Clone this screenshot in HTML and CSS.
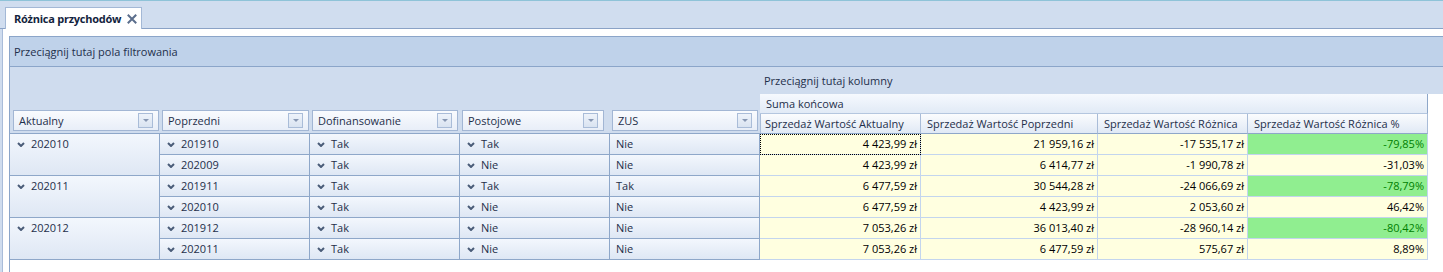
FILE: index.html
```html
<!DOCTYPE html>
<html lang="pl">
<head>
<meta charset="utf-8">
<title>Różnica przychodów</title>
<link rel="stylesheet" href="styles.css">
</head>
<body>
<div class="tabstrip">
  <div class="tabstrip-lead"></div>
  <div class="tab">
    <span class="tab-title">Różnica przychodów</span>
    <svg class="tab-close" width="10" height="10" viewBox="0 0 10 10"><path d="M1.5 1.5 L8.5 8.5 M8.5 1.5 L1.5 8.5" stroke="#5b6e8c" stroke-width="2" stroke-linecap="square"/></svg>
  </div>
  <div class="tabstrip-fill"></div>
</div>
<div class="panel">
  <div class="grid-box">
    <div class="filter-bar">Przeciągnij tutaj pola filtrowania</div>
    <div class="pivot">
      <div class="row-fields">
        <div class="field f-first"><span>Aktualny</span><span class="dd"><i></i></span></div>
        <div class="field"><span>Poprzedni</span><span class="dd"><i></i></span></div>
        <div class="field f-dof"><span>Dofinansowanie</span><span class="dd"><i></i></span></div>
        <div class="field f-post"><span>Postojowe</span><span class="dd"><i></i></span></div>
        <div class="field f-zus"><span>ZUS</span><span class="dd"><i></i></span></div>
      </div>
      <div class="col-drop">Przeciągnij tutaj kolumny</div>
      <div class="grand-total">Suma końcowa</div>
      <div class="col-head ch-first">Sprzedaż Wartość Aktualny</div>
      <div class="col-head">Sprzedaż Wartość Poprzedni</div>
      <div class="col-head">Sprzedaż Wartość Różnica</div>
      <div class="col-head">Sprzedaż Wartość Różnica %</div>

      <!-- 202010 -->
      <div class="rh rh-akt"><span class="chev"></span>202010</div>
      <div class="rh rh-prev"><span class="chev"></span>201910</div>
      <div class="rh"><span class="chev"></span>Tak</div>
      <div class="rh"><span class="chev"></span>Tak</div>
      <div class="rh rh-plain">Nie</div>
      <div class="val focus">4 423,99 zł</div>
      <div class="val">21 959,16 zł</div>
      <div class="val">-17 535,17 zł</div>
      <div class="val good">-79,85%</div>

      <div class="rh rh-prev"><span class="chev"></span>202009</div>
      <div class="rh"><span class="chev"></span>Tak</div>
      <div class="rh"><span class="chev"></span>Nie</div>
      <div class="rh rh-plain">Nie</div>
      <div class="val">4 423,99 zł</div>
      <div class="val">6 414,77 zł</div>
      <div class="val">-1 990,78 zł</div>
      <div class="val">-31,03%</div>

      <!-- 202011 -->
      <div class="rh rh-akt"><span class="chev"></span>202011</div>
      <div class="rh rh-prev"><span class="chev"></span>201911</div>
      <div class="rh"><span class="chev"></span>Tak</div>
      <div class="rh"><span class="chev"></span>Tak</div>
      <div class="rh rh-plain">Tak</div>
      <div class="val">6 477,59 zł</div>
      <div class="val">30 544,28 zł</div>
      <div class="val">-24 066,69 zł</div>
      <div class="val good">-78,79%</div>

      <div class="rh rh-prev"><span class="chev"></span>202010</div>
      <div class="rh"><span class="chev"></span>Tak</div>
      <div class="rh"><span class="chev"></span>Nie</div>
      <div class="rh rh-plain">Nie</div>
      <div class="val">6 477,59 zł</div>
      <div class="val">4 423,99 zł</div>
      <div class="val">2 053,60 zł</div>
      <div class="val">46,42%</div>

      <!-- 202012 -->
      <div class="rh rh-akt"><span class="chev"></span>202012</div>
      <div class="rh rh-prev"><span class="chev"></span>201912</div>
      <div class="rh"><span class="chev"></span>Tak</div>
      <div class="rh"><span class="chev"></span>Nie</div>
      <div class="rh rh-plain">Nie</div>
      <div class="val">7 053,26 zł</div>
      <div class="val">36 013,40 zł</div>
      <div class="val">-28 960,14 zł</div>
      <div class="val good">-80,42%</div>

      <div class="rh rh-prev"><span class="chev"></span>202011</div>
      <div class="rh"><span class="chev"></span>Tak</div>
      <div class="rh"><span class="chev"></span>Nie</div>
      <div class="rh rh-plain">Nie</div>
      <div class="val">7 053,26 zł</div>
      <div class="val">6 477,59 zł</div>
      <div class="val">575,67 zł</div>
      <div class="val">8,89%</div>
    </div>
  </div>
</div>
</body>
</html>
```
FILE: styles.css
```css
* { box-sizing: border-box; }
html, body { margin: 0; padding: 0; }
body {
  height: 100vh;
  display: flex;
  flex-direction: column;
  background: #cfdcee;
  font-family: "Open Sans", "Noto Sans", sans-serif;
  font-size: 11px;
  color: #1e2f4a;
  overflow: hidden;
}

/* tab strip */
.tabstrip {
  display: flex;
  height: 29px;
  border-top: 1px solid #8ec3d8;
  background: #d0ddef;
  flex: none;
}
.tabstrip-lead { width: 5px; border-bottom: 1px solid #8aa2c6; }
.tabstrip-fill { flex: 1; border-bottom: 1px solid #8aa2c6; }
.tab {
  width: 137px;
  height: 22px;
  margin-top: 6px;
  background: #fff;
  border: 1px solid #a3b8d6;
  border-bottom: none;
  display: flex;
  align-items: center;
  padding: 0 4px 0 8px;
  flex: none;
}
.tab-title {
  font-weight: bold;
  color: #13233d;
  font-size: 11px;
  white-space: nowrap;
  letter-spacing: -0.25px;
  flex: none;
}
.tab-close { display: block; margin: 1px 0 0 auto; flex: none; }

/* panel */
.panel {
  flex: 1;
  margin-left: 2px;
  border-left: 1px solid #a9bcd9;
  background: #fff;
  padding: 7px 0 0 6px;
  display: flex;
  flex-direction: column;
}
.grid-box {
  flex: 1;
  border-top: 1px solid #8ba5c9;
  border-left: 1px solid #8ba5c9;
  background: #fff;
}
.filter-bar {
  height: 30px;
  background: #bfd2ea;
  border-bottom: 1px solid #8ba5c9;
  padding: 1px 0 0 4px;
  line-height: 28px;
  color: #1e2f4a;
}

/* pivot grid */
.pivot {
  display: grid;
  grid-template-columns: 150px 150px 150px 150px 150px 161px 177px 150px 180px 1fr;
  grid-template-rows: 27px 20px 20px;
  grid-auto-rows: 21px;
}
.row-fields {
  grid-column: 1 / 6;
  grid-row: 1 / 4;
  background: #cfdcee;
  border-bottom: 1px solid #8ea7c9;
  display: grid;
  grid-template-columns: repeat(5, 150px);
  align-items: end;
  padding-bottom: 2px;
}
.field {
  height: 21px;
  margin: 0 1px 0 2px;
  border: 1px solid #a2b6d4;
  background: linear-gradient(#f9fbfe, #e8eef8);
  display: flex;
  align-items: center;
  justify-content: space-between;
  padding: 0 5px 0 5px;
  color: #1e2f4a;
}
.field.f-first { margin-left: 3px; }
.field.f-dof { margin-right: 2px; }
.field.f-post { margin-right: 6px; }
.field.f-zus { margin-right: 2px; }
.dd {
  width: 15px;
  height: 15px;
  border: 1px solid #a9bcd8;
  background: linear-gradient(#eef3fa, #d9e3f1);
  display: flex;
  align-items: center;
  justify-content: center;
}
.dd i {
  display: block;
  width: 0;
  height: 0;
  border-left: 3px solid transparent;
  border-right: 3px solid transparent;
  border-top: 3px solid #8797b3;
}
.col-drop {
  grid-column: 6 / -1;
  grid-row: 1;
  background: #cfdcee;
  padding: 4px 0 0 4px;
  line-height: 20px;
}
.grand-total {
  grid-column: 6 / 10;
  grid-row: 2;
  background: linear-gradient(#f6f9fe, #e1eaf6);
  border-bottom: 1px solid #b4c6df;
  border-right: 1px solid #8ea7c9;
  padding-left: 6px;
  line-height: 19px;
}
.col-head {
  grid-row: 3;
  background: linear-gradient(#fbfcfe, #e0e9f5);
  border-right: 1px solid #a9bcd8;
  border-bottom: 1px solid #8ea7c9;
  padding-left: 6px;
  line-height: 19px;
  white-space: nowrap;
}
.col-head.ch-first { grid-column: 6; box-shadow: inset 1px 0 0 #a9bcd8; padding-left: 5px; }

/* row header cells */
.rh {
  background: linear-gradient(#f3f7fd, #dee7f4);
  border-right: 1px solid #8ea7c9;
  border-bottom: 1px solid #8ea7c9;
  display: flex;
  align-items: flex-start;
  padding-left: 7px;
  line-height: 20px;
  color: #1e2f4a;
  white-space: nowrap;
}
.rh-akt { grid-column: 1; grid-row: span 2; }
.rh-prev { grid-column: 2; }
.rh-plain { padding-left: 6px; }
.chev {
  width: 8px;
  height: 20px;
  margin-right: 6px;
  flex: none;
  background: no-repeat center 8px / 8px 5px url("data:image/svg+xml;utf8,<svg xmlns='http://www.w3.org/2000/svg' width='8' height='5' viewBox='0 0 8 5'><polyline points='1,1 4,4 7,1' fill='none' stroke='%234a5c78' stroke-width='2'/></svg>");
}

/* value cells */
.val {
  background: #ffffe0;
  border-right: 1px solid #c3d5ee;
  border-bottom: 1px solid #c3d5ee;
  text-align: right;
  padding-right: 3px;
  line-height: 20px;
  color: #000;
  white-space: nowrap;
}
.val.good { background: #90ee90; color: #008000; }
.val.focus { outline: 1px dotted #000; outline-offset: -1px; }
```
